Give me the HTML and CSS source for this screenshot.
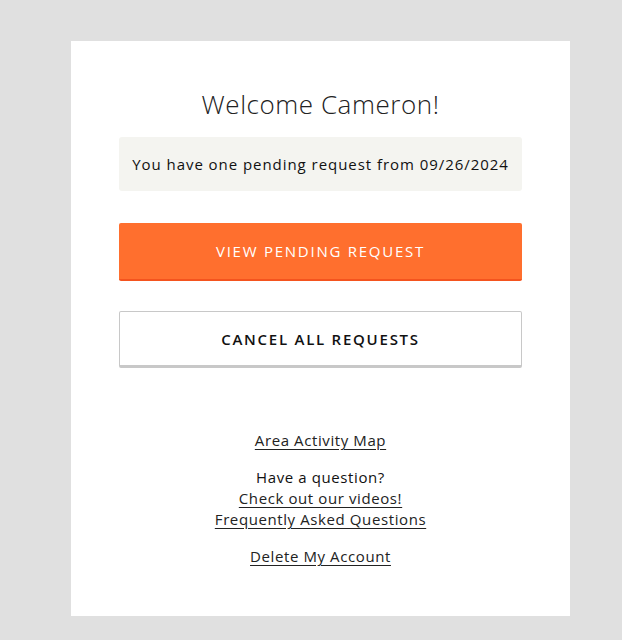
FILE: index.html
```html
<!DOCTYPE html>
<html>
<head>
<meta charset="utf-8">
<link rel="stylesheet" href="styles.css">
</head>
<body>
<div class="card">
  <h1 class="title">Welcome Cameron!</h1>
  <div class="notice">You have one pending request from 09/26/2024</div>
  <a class="btn btn-primary" href="#">VIEW PENDING REQUEST</a>
  <a class="btn btn-secondary" href="#">CANCEL ALL REQUESTS</a>
  <div class="links">
    <a class="link" href="#">Area Activity Map</a>
    <div class="help">
      <span class="q">Have a question?</span>
      <a class="link" href="#">Check out our videos!</a>
      <a class="link" href="#">Frequently Asked Questions</a>
    </div>
    <a class="link" href="#">Delete My Account</a>
  </div>
</div>
</body>
</html>
```
FILE: styles.css
```css
* { box-sizing: border-box; }
html, body { margin: 0; padding: 0; }
body {
  background: #e0e0e0;
  font-family: "Open Sans", "Liberation Sans", sans-serif;
  color: #1a1a1a;
  padding: 41px 52px 24px 71px;
}
.card {
  width: 499px;
  height: 575px;
  background: #fff;
  padding: 46px 48px 0 48px;
  display: flex;
  flex-direction: column;
  align-items: stretch;
}
.title {
  margin: 0;
  font-weight: 300;
  font-size: 26px;
  line-height: 34px;
  text-align: center;
  color: #222;
  letter-spacing: 0.55px;
}
.notice {
  margin-top: 16px;
  height: 54px;
  background: #f4f4f0;
  border-radius: 3px;
  display: flex;
  align-items: center;
  justify-content: center;
  font-size: 15px;
  letter-spacing: 0.95px;
  color: #111;
}
.btn {
  display: flex;
  align-items: center;
  justify-content: center;
  height: 58px;
  text-decoration: none;
  font-size: 15px;
  letter-spacing: 1.75px;
  font-weight: 500;
}
.btn-primary {
  margin-top: 32px;
  background: #ff6f2e;
  color: #fff;
  border-bottom: 2px solid #f4531e;
  border-radius: 2px;
}
.btn-secondary {
  margin-top: 30px;
  background: #fff;
  color: #111;
  border: 1px solid #c8c8c8;
  border-bottom: 3px solid #c8c8c8;
  border-radius: 2px;
  height: 57px;
  font-weight: 600;
  letter-spacing: 1.75px;
}
.links {
  margin-top: 62px;
  display: flex;
  flex-direction: column;
  align-items: center;
  font-size: 15px;
  letter-spacing: 0.6px;
}
.link {
  color: #222;
  text-decoration: underline;
  text-underline-offset: 3px;
  line-height: 21px;
}
.help {
  margin-top: 16px;
  display: flex;
  flex-direction: column;
  align-items: center;
}
.q { color: #111; line-height: 21px; }
.help + .link { margin-top: 16px; }
```
